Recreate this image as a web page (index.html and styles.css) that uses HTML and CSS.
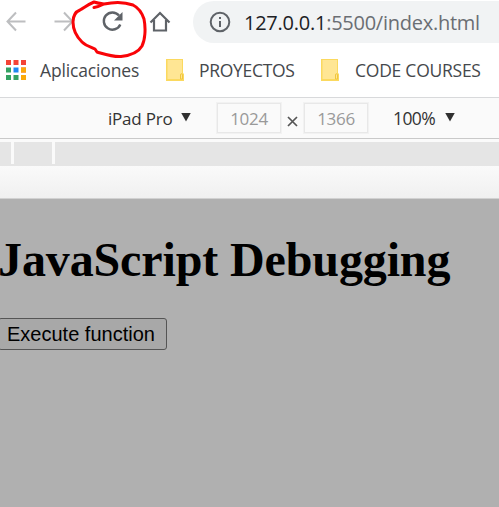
FILE: index.html
```html
<!DOCTYPE html>
<html lang="es">
<head>
<meta charset="utf-8">
<title>JavaScript Debugging</title>
<link rel="stylesheet" href="styles.css">
</head>
<body>
<header class="toolbar">
  <svg class="nav-icons" width="193" height="47" viewBox="0 0 193 47" fill="none">
    <g stroke="#bdbec0" stroke-width="2">
      <path d="M25.500 21.500H8M16 12.500l-8.500 9 8.500 9"/>
      <path d="M54.500 21.500H72M64 12.500l8.500 9-8.500 9"/>
    </g>
    <path d="M119 15.500A8.600 8.600 0 1 0 120.300 24.500" stroke="#5f6368" stroke-width="2.400"/>
    <path d="M122.500 12v8.500h-8.500z" fill="#5f6368"/>
    <path d="M150.500 22.500L160 13l9.500 9.500M154 20v10.500h12V20" stroke="#5f6368" stroke-width="2.200"/>
  </svg>
  <div class="address">
    <svg width="22" height="22" viewBox="0 0 22 22" fill="none" stroke="#5f6368" stroke-width="2">
      <circle cx="11" cy="11" r="9.300"/>
      <path d="M11 6v2M11 10v6"/>
    </svg>
    <span class="url"><span class="host">127.0.0.1</span>:5500/index.html</span>
  </div>
</header>
<svg class="marker" width="80" height="64" viewBox="70 0 80 64" fill="none">
  <path d="M94 7.500C98 7 101 5.500 104 4C100 3.500 97 3 94 2C87 5 84 8 80 10C75 12 73 17 73 22C73 31 77 37 82 42C86 46 91 47 95 49L97 52C104 54 112 57 121 56.500C130 55.500 138 53 142 46C145 40 146 29 144 19C142 13 139 8 133 5C125 2 113 2 104 4" stroke="#f90408" stroke-width="3" stroke-linecap="round" stroke-linejoin="round"/>
</svg>
<nav class="bookmarks">
  <svg class="apps" width="20" height="20" viewBox="0 0 20 20">
    <path fill="#f44336" d="M0 0h5v5H0zM7.500 0h5v5h-5zM15 0h5v5h-5z"/>
    <path fill="#f44336" d="M15 7.500h5v5h-5z"/>
    <path fill="#34a262" d="M0 7.500h5v5H0zM0 15h5v5H0zM7.500 15h5v5h-5z"/>
    <path fill="#1e88f0" d="M7.500 7.500h5v5h-5z"/>
    <path fill="#fba90a" d="M15 7.500h5v5h-5zM15 15h5v5h-5z"/>
  </svg>
  <span class="label apps-label">Aplicaciones</span>
  <svg class="folder" width="18" height="22" viewBox="0 0 18 22"><path d="M0 0h17v14l1 1v7H0z" fill="#fbd95f"/><path d="M1.500 1H16v13l-2 1v5H1.500z" fill="#ffe694"/><path d="M14.500 20v-4.500q1-1 2 0V20z" fill="#ffe694" stroke="#f0c53e"/></svg>
  <span class="label projects">PROYECTOS</span>
  <svg class="folder" width="18" height="22" viewBox="0 0 18 22"><path d="M0 0h17v14l1 1v7H0z" fill="#fbd95f"/><path d="M1.500 1H16v13l-2 1v5H1.500z" fill="#ffe694"/><path d="M14.500 20v-4.500q1-1 2 0V20z" fill="#ffe694" stroke="#f0c53e"/></svg>
  <span class="label courses">CODE COURSES</span>
</nav>
<section class="device-bar">
  <span class="device">iPad Pro</span>
  <i class="arrow"></i>
  <span class="dimension">1024</span>
  <svg class="times" width="11" height="11" viewBox="0 0 11 11"><path d="M1 1l9 9M10 1l-9 9" stroke="#555" stroke-width="1.700"/></svg>
  <span class="dimension">1366</span>
  <span class="zoom">100%</span>
  <i class="arrow"></i>
</section>
<div class="ruler"><i></i><i></i></div>
<div class="stage"></div>
<main class="page">
  <h1>JavaScript Debugging</h1>
  <button type="button">Execute function</button>
</main>
</body>
</html>
```
FILE: styles.css
```css
* { box-sizing: border-box; }
body {
  margin: 0;
  height: 507px;
  overflow: hidden;
  display: flex;
  flex-direction: column;
  background: #fff;
  font-family: "Open Sans", "Noto Sans", sans-serif;
}
svg { display: block; flex: none; }
span { white-space: nowrap; }
.toolbar { display: flex; height: 47px; flex: none; }
.address {
  display: flex;
  align-items: center;
  flex: 1;
  height: 42px;
  margin-top: 1px;
  padding-left: 16px;
  border-radius: 21px 0 0 21px;
  background: #f1f3f4;
}
.url { margin-left: 13px; font-size: 20px; letter-spacing: -0.25px; color: #6a6e73; }
.host { color: #202124; }
.marker { position: absolute; left: 70px; top: 0; }
.bookmarks {
  display: flex;
  align-items: center;
  flex: none;
  height: 51px;
  padding: 0 0 5px 6px;
  border-bottom: 1px solid #d8d9db;
}
.label { color: #45484c; font-size: 17.5px; }
.apps-label { width: 126px; margin-left: 14px; letter-spacing: -0.15px; }
.projects { width: 122px; margin-left: 15px; letter-spacing: -0.3px; }
.courses { margin-left: 16px; letter-spacing: -0.25px; }
.device-bar {
  display: flex;
  align-items: center;
  flex: none;
  height: 41px;
  padding-left: 108px;
  border-bottom: 1px solid #c9c9c9;
  background: #fafafa;
  color: #333;
  font-size: 17px;
}
.device { width: 73px; letter-spacing: -0.2px; }
.arrow {
  width: 10px;
  height: 9px;
  margin-bottom: 2px;
  background: #303030;
  clip-path: polygon(0 0, 100% 0, 50% 100%);
}
.dimension {
  display: flex;
  align-items: center;
  justify-content: center;
  width: 64px;
  height: 30px;
  border: 1px solid #e8e8e8;
  outline: 1px solid #f2f2f2;
  color: #999;
  letter-spacing: -0.3px;
}
.arrow + .dimension { margin-left: 26px; }
.times { margin: 6px 6px 0 6px; }
.zoom { width: 52px; margin-left: 25px; font-size: 17.5px; letter-spacing: -0.6px; }
.ruler {
  display: flex;
  flex: none;
  gap: 38px;
  height: 27px;
  padding-left: 11px;
  border-top: 3px solid #fafafa;
  background: #e5e5e5;
}
.ruler i { width: 3px; height: 22px; background: #fafafa; }
.stage {
  flex: none;
  height: 33px;
  border-bottom: 1px solid #d1d1d1;
  background: linear-gradient(#fafafa, #f0f0f0);
}
.page { flex: 1; background: #b0b0b0; }
h1 {
  margin: 34px 0 0 -2px;
  height: 54px;
  color: #000;
  font: bold 48px/54px "Liberation Serif", serif;
  letter-spacing: -0.12px;
  white-space: nowrap;
}
button {
  display: block;
  width: 169px;
  height: 32px;
  margin: 31px 0 0 -2px;
  padding: 0 0 0 8px;
  border: 1px solid #555;
  border-radius: 3px;
  background: #a8a8a8;
  color: #000;
  font: 20px/30px "Liberation Sans", sans-serif;
  text-align: left;
}
```
